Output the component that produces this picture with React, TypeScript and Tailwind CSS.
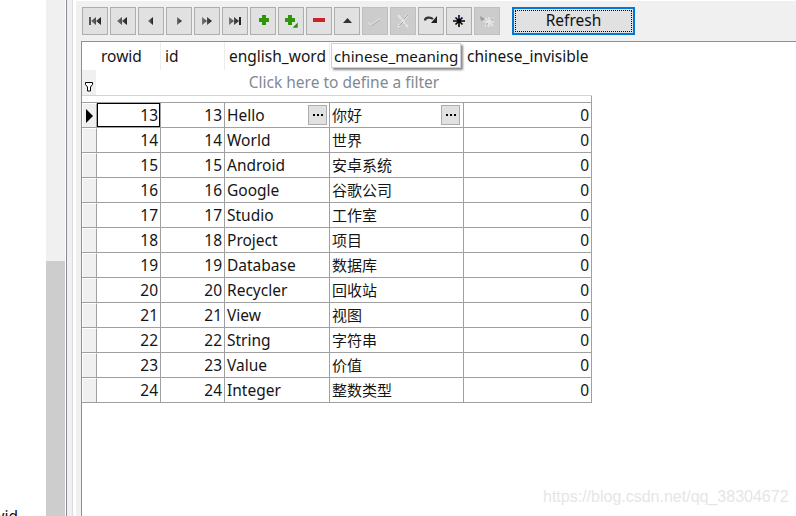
import React from "react";

const rows: [number, string, string][] = [
  [13, "Hello", "你好"],
  [14, "World", "世界"],
  [15, "Android", "安卓系统"],
  [16, "Google", "谷歌公司"],
  [17, "Studio", "工作室"],
  [18, "Project", "项目"],
  [19, "Database", "数据库"],
  [20, "Recycler", "回收站"],
  [21, "View", "视图"],
  [22, "String", "字符串"],
  [23, "Value", "价值"],
  [24, "Integer", "整数类型"],
];

const font = "[font-family:'Noto_Sans','Noto_Sans_CJK_SC',sans-serif]";

function Ico({ children }: { children: React.ReactNode }) {
  return (
    <svg width="26" height="28" viewBox="0 0 26 28" className="block -m-px shrink-0">
      <defs>
        <linearGradient id="nv" x1="0" x2="1" y1="0" y2="0">
          <stop offset="0" stopColor="#777" />
          <stop offset="1" stopColor="#222" />
        </linearGradient>
      </defs>
      {children}
    </svg>
  );
}

function Tool({ disabled, children }: { disabled?: boolean; children: React.ReactNode }) {
  return (
    <div
      className={
        "w-[26px] h-[28px] border flex items-center justify-center " +
        (disabled ? "bg-[#cccccc] border-[#bfbfbf]" : "bg-[#e1e1e1] border-[#adadad]")
      }
    >
      <Ico>{children}</Ico>
    </div>
  );
}

function Dots({ second }: { second?: boolean }) {
  return (
    <div
      className={
        "absolute top-[2px] w-[19px] h-[20px] bg-[#e1e1e1] border border-[#adadad] flex items-center justify-center gap-[2px] " +
        (second ? "right-[3px]" : "right-[2px]")
      }
    >
      <span className="w-[2px] h-[2px] bg-black" />
      <span className="w-[2px] h-[2px] bg-black" />
      <span className="w-[2px] h-[2px] bg-black" />
    </div>
  );
}

export default function App() {
  const nv = "url(#nv)";
  return (
    <div className={"relative flex w-[796px] h-[516px] overflow-hidden bg-white text-[#151515] text-[15.5px] " + font}>
      {/* left pane */}
      <div className="w-[46px] flex flex-col justify-end overflow-hidden">
        <div className="h-[10px] w-[18px] leading-[20px] overflow-hidden whitespace-nowrap flex justify-end text-[#111]">
          rowid
        </div>
      </div>
      <div className="w-[19px] flex flex-col bg-[#f0f0f0]">
        <div className="h-[261px]" />
        <div className="flex-1 bg-[#cdcdcd]" />
      </div>
      <div className="w-[1px]" />
      <div className="w-[1px] bg-[#8a8a94]" />
      <div className="w-[5px] bg-[#f0f0f0]" />
      <div className="w-[1px] bg-[#dcdcdc]" />
      <div className="w-[3px]" />
      <div className="w-[5px] bg-[#f0f0f0] mt-px" />

      {/* right pane */}
      <div className="flex-1 flex flex-col pt-px">
        <div className="h-[40px] shrink-0 bg-[#f0f0f0] pl-px flex items-start pt-[6px]">
          <div className="flex gap-[2px]">
            <Tool>
              <rect x="7" y="10" width="2" height="8" fill="#555" />
              <path d="M14 10v8l-5-4zM19 10v8l-5-4z" fill={nv} />
            </Tool>
            <Tool>
              <path d="M12 10v8l-5-4zM17 10v8l-5-4z" fill={nv} />
            </Tool>
            <Tool>
              <path d="M15 10v8l-5-4z" fill={nv} />
            </Tool>
            <Tool>
              <path d="M11 10v8l5-4z" fill={nv} />
            </Tool>
            <Tool>
              <path d="M8 10v8l5-4zM13 10v8l5-4z" fill={nv} />
            </Tool>
            <Tool>
              <path d="M7 10v8l5-4zM12 10v8l5-4z" fill={nv} />
              <rect x="17" y="10" width="2" height="8" fill="#222" />
            </Tool>
            <Tool>
              <path d="M12 8h4v3h3v4h-3v3h-4v-3H9v-4h3z" fill="#2f960c" />
            </Tool>
            <Tool>
              <path d="M10 8h4v3h3v4h-3v3h-4v-3H7v-4h3z" fill="#2f960c" />
              <path d="M20 15v6h-6z" fill="#2a8a10" stroke="#e1e1e1" strokeWidth="0.6" />
            </Tool>
            <Tool>
              <rect x="7" y="11" width="12" height="4" fill="#c9242c" />
            </Tool>
            <Tool>
              <path d="M9 16l4.5-5 4.5 5z" fill="#333" />
            </Tool>
            <Tool disabled>
              <path d="M6 15l3 2 9-6 1 1-9 7-2-1-2-2z" fill="#dedede" />
              <path d="M9 19l9-6" stroke="#a9a9a9" strokeWidth="1" />
            </Tool>
            <Tool disabled>
              <path d="M8 8l10 12M18 8L8 20" stroke="#e4e4e4" strokeWidth="2.2" strokeDasharray="5 1" />
              <path d="M9 19l4-4M14 12l4-4" stroke="#a5a5a5" strokeWidth="1" />
            </Tool>
            <Tool>
              <path d="M7 13.5c0-3 5-4 8-1.5" fill="none" stroke="#333" strokeWidth="2.2" />
              <path d="M19 9v7h-6z" fill="#222" />
            </Tool>
            <Tool>
              <path d="M7 14h12M13 8v12M9.5 10.5l7 7M16.5 10.5l-7 7" stroke="#000" strokeWidth="1.6" />
              <path d="M13 8v3" stroke="#2438b8" strokeWidth="1.6" />
            </Tool>
            <Tool disabled>
              <path d="M10 15h10M15 10v10M11 11l8 8M19 11l-8 8" stroke="#e6e6e6" strokeWidth="1.6" />
              <path d="M6 9l5 3-4 2z" fill="#9a9a9a" />
              <path d="M12 18l2-2M17 13l2-1" stroke="#a5a5a5" strokeWidth="1" />
            </Tool>
          </div>
          <div className="ml-[12px] w-[123px] h-[28px] border-2 border-[#0078d7] bg-[#e1e1e1] flex items-center justify-center">
            <div className="w-[117px] h-[22px] border border-dotted border-black flex items-center justify-center leading-none text-[#111] -mt-px">
              Refresh
            </div>
          </div>
        </div>

        <div className="flex-1 border-t border-l border-[#8f8f8f]">
          {/* header */}
          <div className="flex h-[28px]">
            <div className="w-[15px]" />
            <div className="w-[64px] pl-[4px] leading-[28px] border-r border-[#ececec]">rowid</div>
            <div className="w-[64px] pl-[4px] leading-[28px] border-r border-[#ececec]">id</div>
            <div className="w-[105px] pl-[4px] leading-[28px] border-r border-[#ececec] whitespace-nowrap">english_word</div>
            <div className="w-[134px] pl-[1px] pt-px">
              <div className="w-[130px] h-[25px] border border-[#cfcfcf] bg-white pl-[2px] leading-[24px] text-[15.2px] shadow-[2px_2px_2px_#8a8a8a] whitespace-nowrap">
                chinese_meaning
              </div>
            </div>
            <div className="pl-[3px] leading-[28px] whitespace-nowrap">chinese_invisible</div>
          </div>
          {/* filter */}
          <div className="flex h-[26px] w-[510px] border-b border-[#d4d4d4]">
            <div className="w-[14px] bg-[#f0f0f0] flex items-end justify-center pb-[3px]">
              <svg width="8" height="10" viewBox="0 0 8 10" className="block">
                <path d="M.5.5h7v2L5.5 5v4h-3V5L.5 2.5z" fill="#fff" stroke="#000" />
              </svg>
            </div>
            <div className="flex-1 text-center leading-[25px] text-[#7f8a94]">Click here to define a filter</div>
          </div>
          <div className="h-[6px] w-[510px] border-r border-[#a0a0a0]" />
          {/* rows */}
          <div className="w-[510px] border-t border-[#a0a0a0]">
            {rows.map((r, i) => (
              <div key={r[0]} className="flex h-[25px] border-b border-[#a0a0a0] leading-[25px]">
                <div className="w-[15px] border-r border-[#a0a0a0] bg-[#f0f0f0] border-t border-t-white border-l border-l-white flex items-center justify-center">
                  {i === 0 && (
                    <svg width="8" height="14" viewBox="0 0 8 14" className="block">
                      <path d="M0 0l7 7-7 7z" fill="#000" />
                    </svg>
                  )}
                </div>
                <div className="w-[64px] border-r border-[#a0a0a0] text-right relative">
                  <span className="pr-[2px] block">{r[0]}</span>
                  {i === 0 && <div className="absolute left-0 top-0 w-[63px] h-[24px] border border-black" />}
                </div>
                <div className="w-[64px] border-r border-[#a0a0a0] text-right pr-[2px]">{r[0]}</div>
                <div className="w-[105px] border-r border-[#a0a0a0] pl-[2px] relative">
                  {r[1]}
                  {i === 0 && <Dots />}
                </div>
                <div className="w-[134px] border-r border-[#a0a0a0] pl-[2px] relative text-[15px]">
                  {r[2]}
                  {i === 0 && <Dots second />}
                </div>
                <div className="w-[128px] border-r border-[#a0a0a0] text-right pr-[2px]">0</div>
              </div>
            ))}
          </div>
        </div>
      </div>
      <div className="absolute left-[543px] top-[487px] text-[16px] leading-[20px] text-[#e6e6e6] font-['Liberation_Sans',sans-serif] whitespace-nowrap">
        https://blog.csdn.net/qq_38304672
      </div>
    </div>
  );
}
